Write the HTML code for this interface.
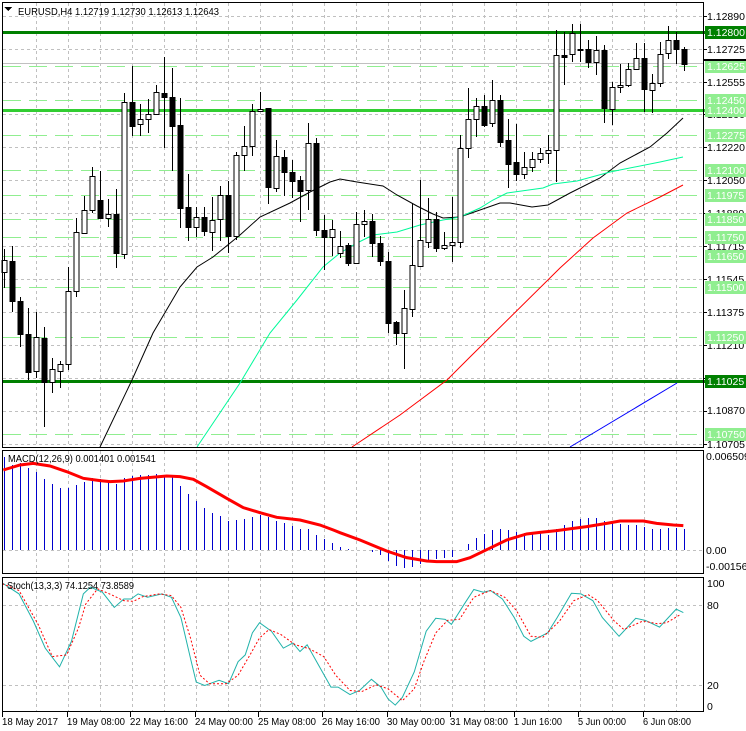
<!DOCTYPE html>
<html><head><meta charset="utf-8"><style>
html,body{margin:0;padding:0;background:#fff;}
svg{display:block;font-family:"Liberation Sans",sans-serif;font-size:10.5px;}
</style></head><body>
<svg id="s" width="746" height="731" viewBox="0 0 746 731" xmlns="http://www.w3.org/2000/svg" shape-rendering="crispEdges">
<rect width="746" height="731" fill="#fff"/>
<g id="grid" stroke="#c0c0c0" stroke-dasharray="3,3" stroke-width="1"></g>
<g id="glines"></g>
<g id="lines" fill="none" shape-rendering="auto"></g>
<g id="candles"></g>
<g id="frames" fill="none" stroke="#000" stroke-width="1">
<rect x="2.5" y="2.5" width="701" height="445"/>
<rect x="2.5" y="450.5" width="701" height="123"/>
<rect x="2.5" y="577.5" width="701" height="134"/>
</g>
<g id="labels" fill="#000">
<path d="M4 7 h8 l-4 4z" fill="#000"/>
<text x="18" y="15" textLength="201" lengthAdjust="spacingAndGlyphs">EURUSD,H4  1.12719 1.12730 1.12613 1.12643</text>
<text x="707" y="20">1.12890</text>
<text x="707" y="53">1.12725</text>
<text x="707" y="86">1.12555</text>
<text x="707" y="118">1.12390</text>
<text x="707" y="151">1.12220</text>
<text x="707" y="184">1.12050</text>
<text x="707" y="217">1.11880</text>
<text x="707" y="250">1.11715</text>
<text x="707" y="283">1.11545</text>
<text x="707" y="316">1.11375</text>
<text x="707" y="349">1.11210</text>
<text x="707" y="414">1.10870</text>
<text x="707" y="448">1.10705</text>
</g>
<g id="boxes"></g>
<text x="8" y="462" textLength="148" lengthAdjust="spacingAndGlyphs">MACD(12,26,9) 0.001401 0.001541</text>
<text x="706" y="460">0.006509</text>
<text x="706" y="554">0.00</text>
<text x="706" y="570">-0.001566</text>
<text x="7" y="589" textLength="127" lengthAdjust="spacingAndGlyphs">Stoch(13,3,3) 74.1254 73.8589</text>
<text x="707" y="587">100</text>
<text x="707" y="609">80</text>
<text x="707" y="689">20</text>
<text x="707" y="710">0</text>
<g font-size="10">
<text x="2" y="725" textLength="56" lengthAdjust="spacingAndGlyphs">18 May 2017</text>
<text x="67" y="725" textLength="58" lengthAdjust="spacingAndGlyphs">19 May 08:00</text>
<text x="130" y="725" textLength="58" lengthAdjust="spacingAndGlyphs">22 May 16:00</text>
<text x="195" y="725" textLength="58" lengthAdjust="spacingAndGlyphs">24 May 00:00</text>
<text x="258" y="725" textLength="58" lengthAdjust="spacingAndGlyphs">25 May 08:00</text>
<text x="322" y="725" textLength="58" lengthAdjust="spacingAndGlyphs">26 May 16:00</text>
<text x="387" y="725" textLength="58" lengthAdjust="spacingAndGlyphs">30 May 00:00</text>
<text x="450" y="725" textLength="58" lengthAdjust="spacingAndGlyphs">31 May 08:00</text>
<text x="514" y="725" textLength="48" lengthAdjust="spacingAndGlyphs">1 Jun 16:00</text>
<text x="578" y="725" textLength="48" lengthAdjust="spacingAndGlyphs">5 Jun 00:00</text>
<text x="643" y="725" textLength="48" lengthAdjust="spacingAndGlyphs">6 Jun 08:00</text>
</g>
</svg>
<script>
var NS="http://www.w3.org/2000/svg";
function el(p,t,a){var e=document.createElementNS(NS,t);for(var k in a)e.setAttribute(k,a[k]);document.getElementById(p).appendChild(e);return e;}
for(var x=36;x<703;x+=32){el("grid","line",{x1:x+.5,y1:3,x2:x+.5,y2:447});el("grid","line",{x1:x+.5,y1:451,x2:x+.5,y2:573});el("grid","line",{x1:x+.5,y1:578,x2:x+.5,y2:711});}
[16,49,82,114,147,180,213,246,279,312,345,378,411,444].forEach(function(y){el("grid","line",{x1:3,y1:y+.5,x2:703,y2:y+.5});});
el("grid","line",{x1:3,y1:550.5,x2:703,y2:550.5});
el("grid","line",{x1:3,y1:605.5,x2:703,y2:605.5});
el("grid","line",{x1:3,y1:685.5,x2:703,y2:685.5});
[16,49,82,114,147,180,213,246,279,312,345,378,411,444].forEach(function(y){el("glines","line",{x1:703,y1:y+.5,x2:707,y2:y+.5,stroke:"#000"});});
[2,67,130,195,258,322,387,450,514,578,643].forEach(function(x){el("glines","line",{x1:x+.5,y1:712,x2:x+.5,y2:717,stroke:"#000"});});
[66,100,135,170,195,219,237,256,287,337,434].forEach(function(y){el("glines","line",{x1:3,y1:y+.5,x2:703,y2:y+.5,stroke:"#90ee90","stroke-dasharray":"18,8","stroke-width":1});});
el("glines","line",{x1:3,y1:63.5,x2:703,y2:63.5,stroke:"#c0c0c0"});
el("glines","rect",{x:3,y:31,width:742,height:3,fill:"#008000"});
el("glines","rect",{x:3,y:109,width:742,height:3,fill:"#32cd32"});
el("glines","rect",{x:3,y:380,width:742,height:3,fill:"#008000"});
var bl=[[66,"1.12625","#90ee90"],[100,"1.12450","#90ee90"],[110,"1.12400","#90ee90"],[135,"1.12275","#90ee90"],[170,"1.12100","#90ee90"],[195,"1.11975","#90ee90"],[219,"1.11850","#90ee90"],[237,"1.11750","#90ee90"],[256,"1.11650","#90ee90"],[287,"1.11500","#90ee90"],[337,"1.11250","#90ee90"],[434,"1.10750","#90ee90"],[32,"1.12800","#008000"],[381,"1.11025","#008000"]];
bl.forEach(function(b){el("boxes","rect",{x:705,y:b[0]-6,width:41,height:13,fill:b[2]});var t=el("boxes","text",{x:707,y:b[0]+4,fill:"#fff"});t.textContent=b[1];});
el("boxes","rect",{x:703,y:59,width:43,height:2,fill:"#000"});
var C=[[260,272,249,288,1],[261,301,246,312,0],[301,334,297,347,0],[334,372,308,380,0],[337,371,312,378,1],[338,382,327,427,0],[369,382,358,393,1],[364,371,361,388,1],[291,364,267,370,1],[232,291,218,297,1],
[210,233,196,234,1],[176,210,167,213,1],[200,218,171,218,0],[214,218,199,227,1],[214,253,189,268,0],[102,254,93,259,1],[102,126,66,136,0],[119,124,104,136,1],[114,119,99,133,1],[92,114,85,114,1],
[93,97,57,148,0],[97,126,68,171,0],[125,208,98,228,0],[207,227,174,241,0],[217,227,207,237,1],[217,231,207,236,0],[220,232,197,251,1],[195,219,186,241,1],[195,236,181,253,0],[155,236,152,240,1],
[146,155,126,171,1],[111,146,104,156,1],[109,111,92,112,1],[108,187,108,204,0],[156,188,140,192,1],[157,172,150,196,0],[172,181,160,198,0],[180,191,176,222,0],[143,190,123,210,1],[143,230,138,236,0],
[230,237,215,270,0],[229,237,220,256,1],[246,253,231,258,1],[245,263,243,266,0],[224,263,212,264,1],[221,224,210,237,1],[221,243,214,257,0],[243,261,236,266,0],[261,323,252,333,0],[322,333,321,345,0],
[308,333,290,369,1],[265,309,203,317,1],[240,266,180,266,1],[219,242,198,248,1],[219,248,212,252,0],[245,248,232,250,1],[242,245,197,262,1],[148,242,135,248,1],[119,148,88,158,1],[106,119,98,137,1],
[106,125,95,127,0],[100,123,80,127,1],[100,142,95,147,0],[140,164,119,188,0],[162,174,124,181,0],[167,174,152,179,1],[159,167,152,172,1],[153,159,148,163,1],[150,153,135,164,1],[55,150,30,182,1],
[55,57,32,85,0],[33,54,24,62,1],[49,50,24,62,0],[49,62,40,68,0],[50,62,36,75,1],[50,108,45,123,0],[87,109,82,125,1],[85,87,64,93,1],[69,85,63,87,1],[58,69,43,70,1],
[58,89,43,112,0],[83,90,74,113,1],[54,83,42,87,1],[40,53,26,59,1],[40,49,32,64,0],[49,64,47,71,0]];
C.forEach(function(c,i){var x=4+8*i;el("candles","line",{x1:x+.5,y1:c[2],x2:x+.5,y2:c[3],stroke:"#000"});
var h=Math.max(c[1]-c[0],1);el("candles","rect",{x:x-2,y:c[0]+.5,width:5,height:h,fill:c[4]?"#fff":"#000",stroke:"#000"});});
function pl(pts,col,w,extra){var a={points:pts.map(function(p){return p[0]+","+p[1];}).join(" "),stroke:col,"stroke-width":w,fill:"none"};for(var k in extra)a[k]=extra[k];return el("lines","polyline",a);}
pl([[100,447],[132,380],[153,333],[180,287],[197,267],[213,257],[240,235],[260,217],[290,203],[310,192],[330,182],[340,179],[357,182],[383,186],[397,195],[417,206],[433,214],[443,218],[460,217],[500,203],[510,203],[532,207],[548,205],[570,193],[600,178],[620,163],[650,147],[667,133],[683,118]],"#000",1);
pl([[197,447],[240,383],[270,333],[297,300],[323,267],[340,253],[357,243],[373,235],[397,232],[420,225],[443,220],[460,217],[480,208],[493,200],[507,193],[543,188],[553,184],[577,181],[610,172],[660,162],[683,157]],"#00fa9a",1);
pl([[352,447],[400,415],[447,380],[470,357],[560,268],[593,238],[627,213],[660,197],[683,185]],"#ff0000",1);
pl([[570,447],[677,383]],"#0000ff",1);
var H=[457,465,463,468,472,479,484,488,488,485,482,478,479,480,484,478,476,475,475,474,476,477,486,494,501,508,513,516,521,520,519,517,515,517,521,523,526,529,529,535,539,543,547,549,550,550,552,555,561,566,568,567,564,561,559,558,557,550,544,538,534,530,529,530,532,533,533,532,535,529,525,521,519,518,518,521,522,524,525,525,527,529,529,528,528,529];
H.forEach(function(y,i){var x=4+8*i;el("lines","line",{x1:x+.5,y1:550,x2:x+.5,y2:y,stroke:"#0000cd","stroke-width":1,"shape-rendering":"crispEdges"});});
var S=[[10,75],[60,60],[100,55],[150,63],[200,80],[250,100],[300,107],[330,110],[370,108],[420,100],[500,93],[540,95],[580,103],[620,125],[680,160],[730,188],[780,203],[830,217],[900,225],[960,240],[1000,255],[1020,263]].map(function(p){return [p[0]/3,445+p[1]/3];});
var S2=[[0,263],[60,285],[140,318],[200,338],[260,348],[290,350],[350,350],[390,338],[440,314],[500,285],[560,267],[600,262],[650,257],[700,250],[740,245],[800,235],[840,228],[910,228],[950,235],[1000,240],[1030,242]].map(function(p){return [340+p[0]/3,445+p[1]/3];});
pl(S.concat(S2),"#ff0000",3);
function sc(a){return a.map(function(p){return [p[0]/2.1,560+p[1]/2.95];});}
pl(sc([[5,68],[40,100],[70,180],[95,260],[125,315],[150,240],[175,100],[190,80],[215,95],[240,140],[260,115],[275,115],[290,100],[310,110],[340,100],[360,110],[380,170],[400,290],[412,360],[430,370],[460,355],[480,365],[500,300],[515,280],[530,215],[545,185],[570,210],[595,260],[615,245],[630,270],[645,250],[665,300],[695,375],[710,375],[735,397],[755,385],[780,352],[800,375],[815,410],[830,428],[845,405],[870,330],[895,210],[915,172],[935,175],[948,190],[975,130],[995,87],[1015,95],[1030,90],[1055,115],[1080,170],[1100,225],[1115,240],[1150,215],[1170,170],[1200,98],[1220,100],[1245,120],[1265,170],[1300,225],[1335,172],[1355,178],[1385,198],[1420,145],[1435,155]]),"#20b2aa",1);
pl(sc([[5,70],[40,90],[80,190],[110,285],[140,280],[165,200],[180,130],[205,85],[230,100],[260,120],[280,122],[300,108],[335,100],[360,105],[380,140],[400,230],[420,340],[440,365],[475,365],[500,340],[525,280],[545,230],[565,205],[590,220],[620,250],[650,262],[680,285],[705,340],[735,385],[760,388],[790,368],[815,380],[845,415],[870,380],[890,300],[915,215],[940,178],[965,175],[995,110],[1030,90],[1060,110],[1085,150],[1115,225],[1140,228],[1175,180],[1205,120],[1235,102],[1255,120],[1290,180],[1310,205],[1350,180],[1380,188],[1400,185],[1430,160]]),"#ff0000",1,{"stroke-dasharray":"2,2"});
</script>
</body></html>
